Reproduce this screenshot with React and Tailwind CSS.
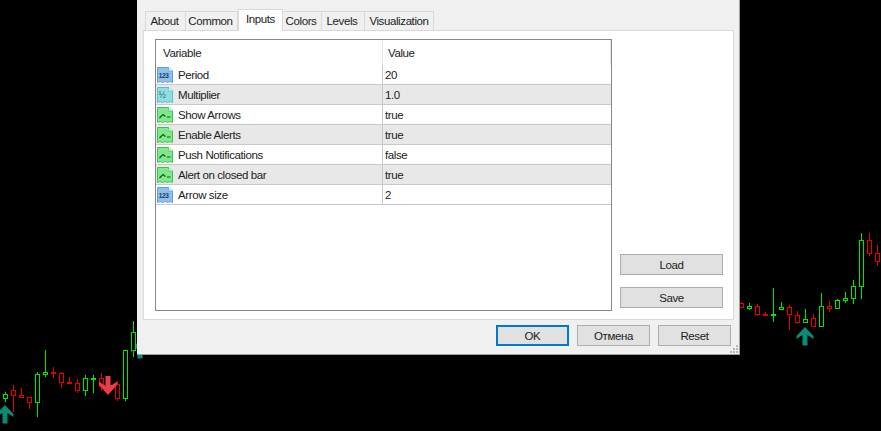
import React from "react";

const GREEN = "#00e600";
const RED = "#e60000";
const TEAL = "#0b8a78";

// x, body top, body bottom, wick top, wick bottom, colour
const candles = [
  [5, 394, 398, 392, 402, GREEN],
  [13, 390, 395, 385, 412, RED],
  [21, 395, 397, 388, 397, RED],
  [29, 397, 402, 397, 409, RED],
  [37, 374, 402, 372, 417, GREEN],
  [45, 372, 374, 350, 377, GREEN],
  [53, 372, 373, 367, 378, RED],
  [61, 373, 382, 372, 388, RED],
  [69, 382, 383, 377, 383, RED],
  [77, 383, 390, 379, 393, RED],
  [85, 378, 390, 375, 396, GREEN],
  [93, 378, 379, 375, 393, GREEN],
  [101, 378, 386, 373, 391, RED],
  [109, 385, 386, 385, 386, GREEN],
  [117, 384, 398, 381, 401, RED],
  [125, 350, 398, 350, 401, GREEN],
  [133, 332, 350, 321, 357, GREEN],
  [741, 303, 307, 302, 308, RED],
  [749, 306, 308, 303, 310, GREEN],
  [757, 306, 314, 304, 316, RED],
  [765, 314, 315, 312, 316, RED],
  [773, 314, 315, 288, 322, GREEN],
  [781, 307, 309, 302, 310, GREEN],
  [789, 307, 314, 305, 330, RED],
  [797, 315, 322, 311, 324, RED],
  [805, 319, 322, 309, 323, GREEN],
  [813, 318, 326, 314, 327, RED],
  [821, 306, 326, 293, 327, GREEN],
  [829, 306, 308, 301, 312, RED],
  [837, 300, 308, 299, 309, GREEN],
  [845, 298, 300, 292, 303, GREEN],
  [853, 286, 298, 280, 304, GREEN],
  [861, 240, 286, 233, 299, GREEN],
  [869, 240, 253, 233, 256, RED],
  [877, 253, 261, 245, 266, RED],
];

const rows = [
  ["Period", "20", "num"],
  ["Multiplier", "1.0", "frac"],
  ["Show Arrows", "true", "bool"],
  ["Enable Alerts", "true", "bool"],
  ["Push Notifications", "false", "bool"],
  ["Alert on closed bar", "true", "bool"],
  ["Arrow size", "2", "num"],
];

const tabs = [
  ["About", "w-[41px] pr-[2px]"],
  ["Common", "w-[52px] pr-[2px]"],
  ["Inputs", "w-[45px]"],
  ["Colors", "w-[39px] pr-[2px]"],
  ["Levels", "w-[43px] pr-[2px]"],
  ["Visualization", "w-[69px]"],
];

const upArrow = (x, y) =>
  `M${x} ${y}L${x + 8.5} ${y + 9}V${y + 12}L${x + 2.5} ${y + 8}V${y + 18.5}H${x - 2.5}V${y + 8}L${x - 8.5} ${y + 12}V${y + 9}Z`;

const Chart = () => (
  <svg className="absolute inset-0" width="881" height="431" shapeRendering="crispEdges">
    <path d={upArrow(140, 340)} fill={TEAL} shapeRendering="auto" />
    {candles.map(([x, top, bottom, wickTop, wickBottom, color]) => (
      <g key={x} stroke={color} fill="none">
        <path d={`M${x + 0.5} ${wickTop}V${top}M${x + 0.5} ${bottom}V${wickBottom}`} />
        <rect x={x - 2 + 0.5} y={top + 0.5} width="4" height={bottom - top} fill="#000" />
      </g>
    ))}
    <g shapeRendering="auto">
      <path d={upArrow(5, 405)} fill={TEAL} />
      <path d={upArrow(805, 327)} fill={TEAL} />
      <path d="M105.5 376H110.5V386L117 381.5V385L108 395L99 385V381.5L105.5 386Z" fill="#ee3a4a" />
    </g>
  </svg>
);

const ParamIcon = ({ type }) => {
  const fill = type === "num" ? "#8fc0ec" : type === "frac" ? "#8fdde0" : "#7fe88a";
  const edge = type === "num" ? "#5f9fd8" : type === "frac" ? "#58c0c8" : "#45c055";
  return (
    <svg width="16" height="16" viewBox="0 0 16 16" className="shrink-0">
      <path d="M0.5 0.5H11.5L15.5 4V15.5L13 14.5L10.5 15.5L8 14.5L5.5 15.5L3 14.5L0.5 15.5Z" fill={fill} stroke={edge} />
      <path d="M11.5 0.5V4H15.5" fill="#eef7ff" stroke={edge} strokeWidth="0.7" />
      {type === "bool" ? (
        <path d="M2.5 11L6 7.5L8.5 9.5M10 10H13.5" fill="none" stroke="#0d5a1c" strokeWidth="1.2" />
      ) : (
        <text
          x="1.8"
          y="11"
          fontSize={type === "num" ? 6.5 : 8.5}
          fontWeight={type === "num" ? 700 : 400}
          fontFamily="Liberation Sans, sans-serif"
          fill={type === "num" ? "#12406e" : "#14626a"}
        >
          {type === "num" ? "123" : "½"}
        </text>
      )}
    </svg>
  );
};

const Row = ({ name, value, type, index }) => (
  <div className={`flex h-5 border-b border-[#c9c9c9] ${index % 2 ? "bg-[#e8e8e8]" : "bg-white"}`}>
    <div className="flex w-[227px] items-center gap-[5px] border-r border-[#c9c9c9] pl-px">
      <ParamIcon type={type} />
      <span className="pt-[2px]">{name}</span>
    </div>
    <div className="flex flex-1 items-center pl-[2px] pt-[2px]">{value}</div>
  </div>
);

const Button = ({ label, className }) => (
  <button className={`flex items-center justify-center bg-[#e1e1e1] pt-[2px] ${className}`}>{label}</button>
);

export default function App() {
  return (
    <div className="relative h-[431px] w-[881px] overflow-hidden bg-black font-['Liberation_Sans',sans-serif] text-[11.5px] tracking-[-0.4px] text-[#222222]">
      <Chart />
      <div className="absolute left-[137px] top-0 flex h-[355px] w-[603px] flex-col bg-[#f0f0f0] pl-[6px] pr-[6px] pt-[9px] shadow-[inset_-1px_-1px_0_#a0a0a0]">
        <div className="relative z-10 flex h-[21px] items-end pl-[2px]">
          {tabs.map(([label, width]) =>
            label === "Inputs" ? (
              <div key={label} className={`-mb-px flex h-[22px] items-center justify-center border border-b-0 border-[#d9d9d9] bg-white pb-[1px] ${width}`}>
                {label}
              </div>
            ) : (
              <div key={label} className={`flex h-[19px] items-center justify-center border border-b-0 border-l-0 border-[#d9d9d9] bg-[#f0f0f0] pt-[2px] first:border-l ${width}`}>
                {label}
              </div>
            )
          )}
        </div>
        <div className="flex h-[290px] border border-[#d9d9d9] bg-white pl-[11px] pr-[10px] pt-[8px]">
          <div className="h-[272px] w-[457px] border border-[#828790] bg-white">
            <div className="flex h-[25px] w-[455px]">
              <div className="flex w-[227px] items-center border-r border-[#e5e5e5] pl-[7px] pt-[2px]">Variable</div>
              <div className="flex flex-1 items-center border-r border-[#e5e5e5] pl-[5px] pt-[2px]">Value</div>
            </div>
            {rows.map(([name, value, type], i) => (
              <Row key={name} name={name} value={value} type={type} index={i} />
            ))}
          </div>
          <div className="ml-[8px] flex flex-col gap-3 pt-[215px]">
            <Button label="Load" className="h-[21px] w-[103px] border border-[#adadad]" />
            <Button label="Save" className="h-[21px] w-[103px] border border-[#adadad]" />
          </div>
        </div>
        <div className="flex justify-end gap-2 pr-[3px] pt-[5px]">
          <Button label="OK" className="h-[21px] w-[73px] border-2 border-[#0078d7]" />
          <Button label="Отмена" className="h-[21px] w-[73px] border border-[#adadad]" />
          <Button label="Reset" className="h-[21px] w-[73px] border border-[#adadad]" />
        </div>
        <svg className="absolute bottom-[2px] right-[2px]" width="8" height="8" fill="#b8b8b8" shapeRendering="crispEdges">
          <path d="M6 0h2v2H6zM3 3h2v2H3zM6 3h2v2H6zM0 6h2v2H0zM3 6h2v2H3zM6 6h2v2H6z" />
        </svg>
      </div>
    </div>
  );
}
